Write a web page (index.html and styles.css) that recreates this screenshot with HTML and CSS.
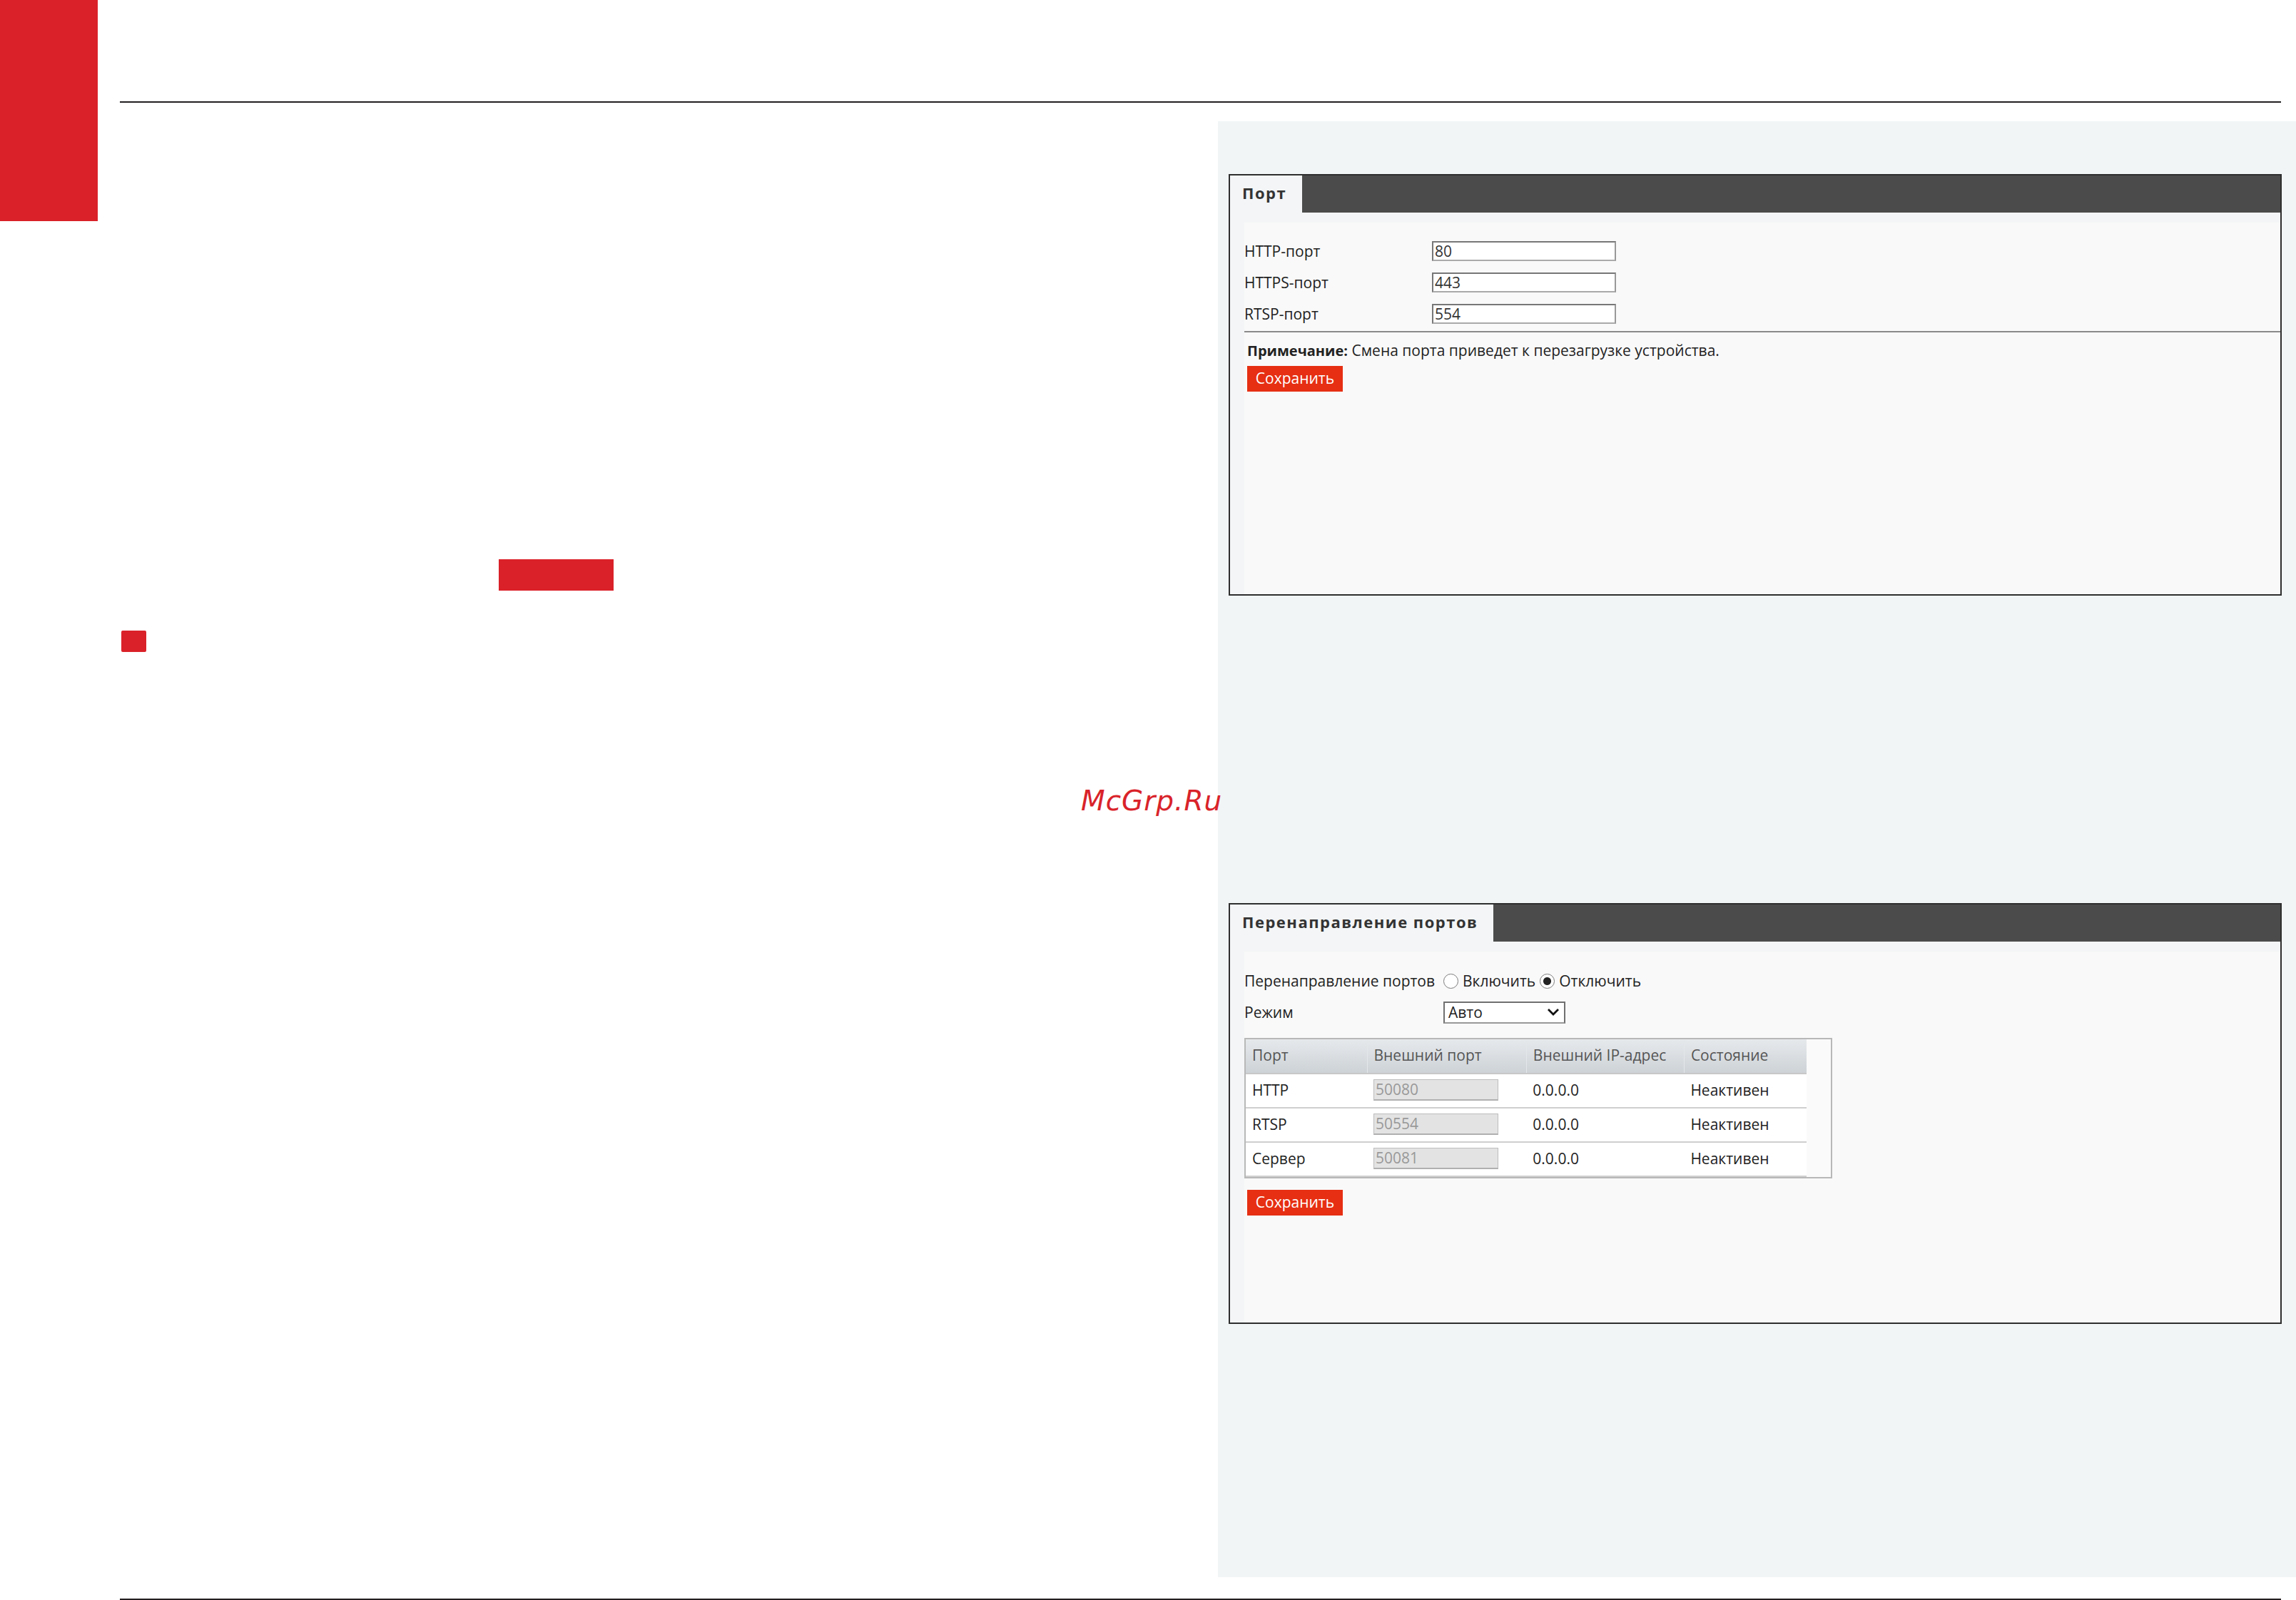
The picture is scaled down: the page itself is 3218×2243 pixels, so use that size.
FILE: index.html
```html
<!DOCTYPE html>
<html lang="ru">
<head>
    <meta charset="UTF-8">
    <title>Порт</title>
    <link rel="stylesheet" href="styles.css">
</head>
<body>
    <div class="page">
        <!-- Red page tab -->
        <div class="side">
            <div class="side-tab"></div>
        </div>

        <div class="main">
            <div class="rule"></div>

            <div class="content">
                <!-- Text column (empty in this page) -->
                <div class="text-col">
                    <div class="label-tag"></div>
                    <div class="bullet"></div>
                </div>

                <!-- Screenshots column -->
                <div class="figure-col">
                    <!-- Port settings -->
                    <div class="panel">
                        <div class="panel-head">
                            <div class="panel-tab">Порт</div>
                        </div>
                        <div class="panel-body">
                            <div class="form-row">
                                <span class="form-label">HTTP-порт</span>
                                <input class="text-input" type="text" value="80">
                            </div>
                            <div class="form-row">
                                <span class="form-label">HTTPS-порт</span>
                                <input class="text-input" type="text" value="443">
                            </div>
                            <div class="form-row">
                                <span class="form-label">RTSP-порт</span>
                                <input class="text-input" type="text" value="554">
                            </div>
                            <div class="separator"></div>
                            <p class="note"><b>Примечание:</b> Смена порта приведет к перезагрузке устройства.</p>
                            <button class="save-btn">Сохранить</button>
                        </div>
                    </div>

                    <!-- Port forwarding -->
                    <div class="panel panel-second">
                        <div class="panel-head">
                            <div class="panel-tab">Перенаправление портов</div>
                        </div>
                        <div class="panel-body">
                            <div class="form-row wide">
                                <span class="form-label">Перенаправление портов</span>
                                <label class="radio"><input type="radio" name="pf"> Включить</label>
                                <label class="radio"><input type="radio" name="pf" checked> Отключить</label>
                            </div>
                            <div class="form-row wide">
                                <span class="form-label">Режим</span>
                                <div class="select">
                                    <span>Авто</span>
                                    <svg width="18" height="12" viewBox="0 0 18 12">
                                        <path d="M2 2 L9 9 L16 2" fill="none" stroke="#111" stroke-width="2.8"/>
                                    </svg>
                                </div>
                            </div>

                            <div class="pf-table">
                                <table>
                                    <thead>
                                        <tr>
                                            <th class="c1">Порт</th>
                                            <th class="c2">Внешний порт</th>
                                            <th class="c3">Внешний IP-адрес</th>
                                            <th class="c4">Состояние</th>
                                        </tr>
                                    </thead>
                                    <tbody>
                                        <tr>
                                            <td>HTTP</td>
                                            <td><input class="ext-input" type="text" value="50080" disabled></td>
                                            <td>0.0.0.0</td>
                                            <td>Неактивен</td>
                                        </tr>
                                        <tr>
                                            <td>RTSP</td>
                                            <td><input class="ext-input" type="text" value="50554" disabled></td>
                                            <td>0.0.0.0</td>
                                            <td>Неактивен</td>
                                        </tr>
                                        <tr>
                                            <td>Сервер</td>
                                            <td><input class="ext-input" type="text" value="50081" disabled></td>
                                            <td>0.0.0.0</td>
                                            <td>Неактивен</td>
                                        </tr>
                                    </tbody>
                                </table>
                            </div>

                            <button class="save-btn save-second">Сохранить</button>
                        </div>
                    </div>
                </div>
            </div>

            <div class="rule rule-bottom"></div>
        </div>

        <div class="watermark">McGrp.Ru</div>
    </div>
</body>
</html>
```

FILE: styles.css
```css
/* General */
body {
    margin: 0;
    padding: 0;
    background: #fff;
    font-family: 'Open Sans', 'Noto Sans', sans-serif;
    color: #222;
}

.page {
    position: relative;
    width: 3218px;
    height: 2243px;
    display: flex;
    overflow: hidden;
}

/* Red tab on the page edge */
.side {
    width: 137px;
    flex-shrink: 0;
}

.side-tab {
    height: 310px;
    background: #da2129;
}

.main {
    flex: 1;
    padding-left: 31px;
    display: flex;
    flex-direction: column;
}

.rule {
    margin-top: 142px;
    margin-right: 21px;
    height: 2px;
    background: #231f20;
}

.rule-bottom {
    margin-top: 30px;
}

.content {
    display: flex;
    margin-top: 26px;
    height: 2041px;
}

/* Left text column */
.text-col {
    width: 1539px;
    flex-shrink: 0;
}

.label-tag {
    margin-left: 531px;
    margin-top: 614px;
    width: 161px;
    height: 44px;
    background: #da2129;
}

.bullet {
    margin-left: 2px;
    margin-top: 56px;
    width: 35px;
    height: 30px;
    border-radius: 2px;
    background: #da2129;
}

/* Right screenshot column */
.figure-col {
    flex: 1;
    background: #f2f5f6;
    padding: 74px 20px 0 15px;
}

.panel {
    height: 591px;
    box-sizing: border-box;
    border: 2px solid #2e2e2e;
    background: #f3f5f6;
    display: flex;
    flex-direction: column;
}

.panel-second {
    margin-top: 431px;
    height: 590px;
}

.panel-head {
    display: flex;
    height: 52px;
    background: #4b4b4b;
}

.panel-tab {
    background: #f3f5f6;
    padding: 0 22px 4px 17px;
    line-height: 48px;
    font-size: 22px;
    font-weight: bold;
    letter-spacing: 1.5px;
    color: #333;
}

.panel-body {
    flex: 1;
    margin: 14px 0 0 20px;
    padding-top: 18px;
    background: #f9f9f9;
}

.panel-second .panel-body {
    padding-top: 19px;
}

/* Form rows */
.form-row {
    display: flex;
    align-items: center;
    height: 44px;
    font-size: 21px;
}

.form-label {
    width: 263px;
    flex-shrink: 0;
}

.wide .form-label {
    width: 279px;
}

.text-input {
    width: 258px;
    height: 28px;
    box-sizing: border-box;
    border: 2px solid #777;
    border-bottom-color: #aaa;
    border-right-color: #999;
    background: #fff;
    padding: 0 2px;
    font-family: 'Open Sans', sans-serif;
    font-size: 21px;
    color: #333;
}

.separator {
    height: 2px;
    margin-top: 2px;
    background: #8a8a8a;
}

.note {
    margin: 10px 0 0 4px;
    line-height: 30px;
    font-size: 21px;
}

.note b {
    font-size: 20px;
}

.save-btn {
    display: block;
    margin: 6px 0 0 4px;
    width: 134px;
    height: 36px;
    border: none;
    background: #e62f13;
    color: #fff;
    font-family: 'Open Sans', sans-serif;
    font-size: 21px;
    padding: 0 0 2px;
}

.save-second {
    margin-top: 16px;
}

/* Radio buttons */
.radio {
    display: flex;
    align-items: center;
    margin-right: 6px;
}

.radio input {
    appearance: none;
    -webkit-appearance: none;
    width: 21px;
    height: 21px;
    margin: 0 6px 0 0;
    border: 1px solid #7a7a7a;
    border-radius: 50%;
    background: #fff;
}

.radio input:checked {
    background: radial-gradient(circle, #222 0, #222 5px, #fff 6px);
}

/* Select box */
.select {
    width: 171px;
    height: 31px;
    box-sizing: border-box;
    border: 2px solid #707070;
    border-bottom-color: #999;
    background: #fff;
    display: flex;
    align-items: center;
    justify-content: space-between;
    padding: 0 6px 0 5px;
}

/* Port forwarding table */
.pf-table {
    margin-top: 14px;
    width: 824px;
    box-sizing: border-box;
    border: 2px solid #b8b8b8;
    background: #fafafa;
}

.pf-table table {
    border-collapse: collapse;
    width: 786px;
    font-size: 21px;
}

.pf-table th {
    height: 43px;
    padding: 0 0 4px 9px;
    text-align: left;
    font-weight: normal;
    color: #555;
    background: linear-gradient(#e6e9ec, #cdd2d6);
    border-right: 1px solid #e4e7ea;
    border-bottom: 2px solid #c8c8c8;
}

.pf-table .c1 { width: 162px; }
.pf-table .c2 { width: 214px; }
.pf-table .c3 { width: 213px; }
.pf-table .c4 { width: 163px; border-right: none; }

.pf-table td {
    height: 43px;
    padding: 0 0 3px 9px;
    background: #fff;
    border-bottom: 2px solid #cfcfcf;
}

.ext-input {
    width: 175px;
    height: 30px;
    box-sizing: border-box;
    border: 1px solid #bdbdbd;
    border-bottom: 2px solid #b0b0b0;
    background: #e3e3e3;
    padding: 0 2px;
    font-family: 'Open Sans', sans-serif;
    font-size: 21px;
    color: #999;
}

/* Watermark */
.watermark {
    position: absolute;
    left: 1515px;
    top: 1103px;
    font-family: 'DejaVu Sans', sans-serif;
    font-style: oblique;
    font-size: 39px;
    line-height: 39px;
    letter-spacing: 1px;
    color: #d9232a;
}
```
